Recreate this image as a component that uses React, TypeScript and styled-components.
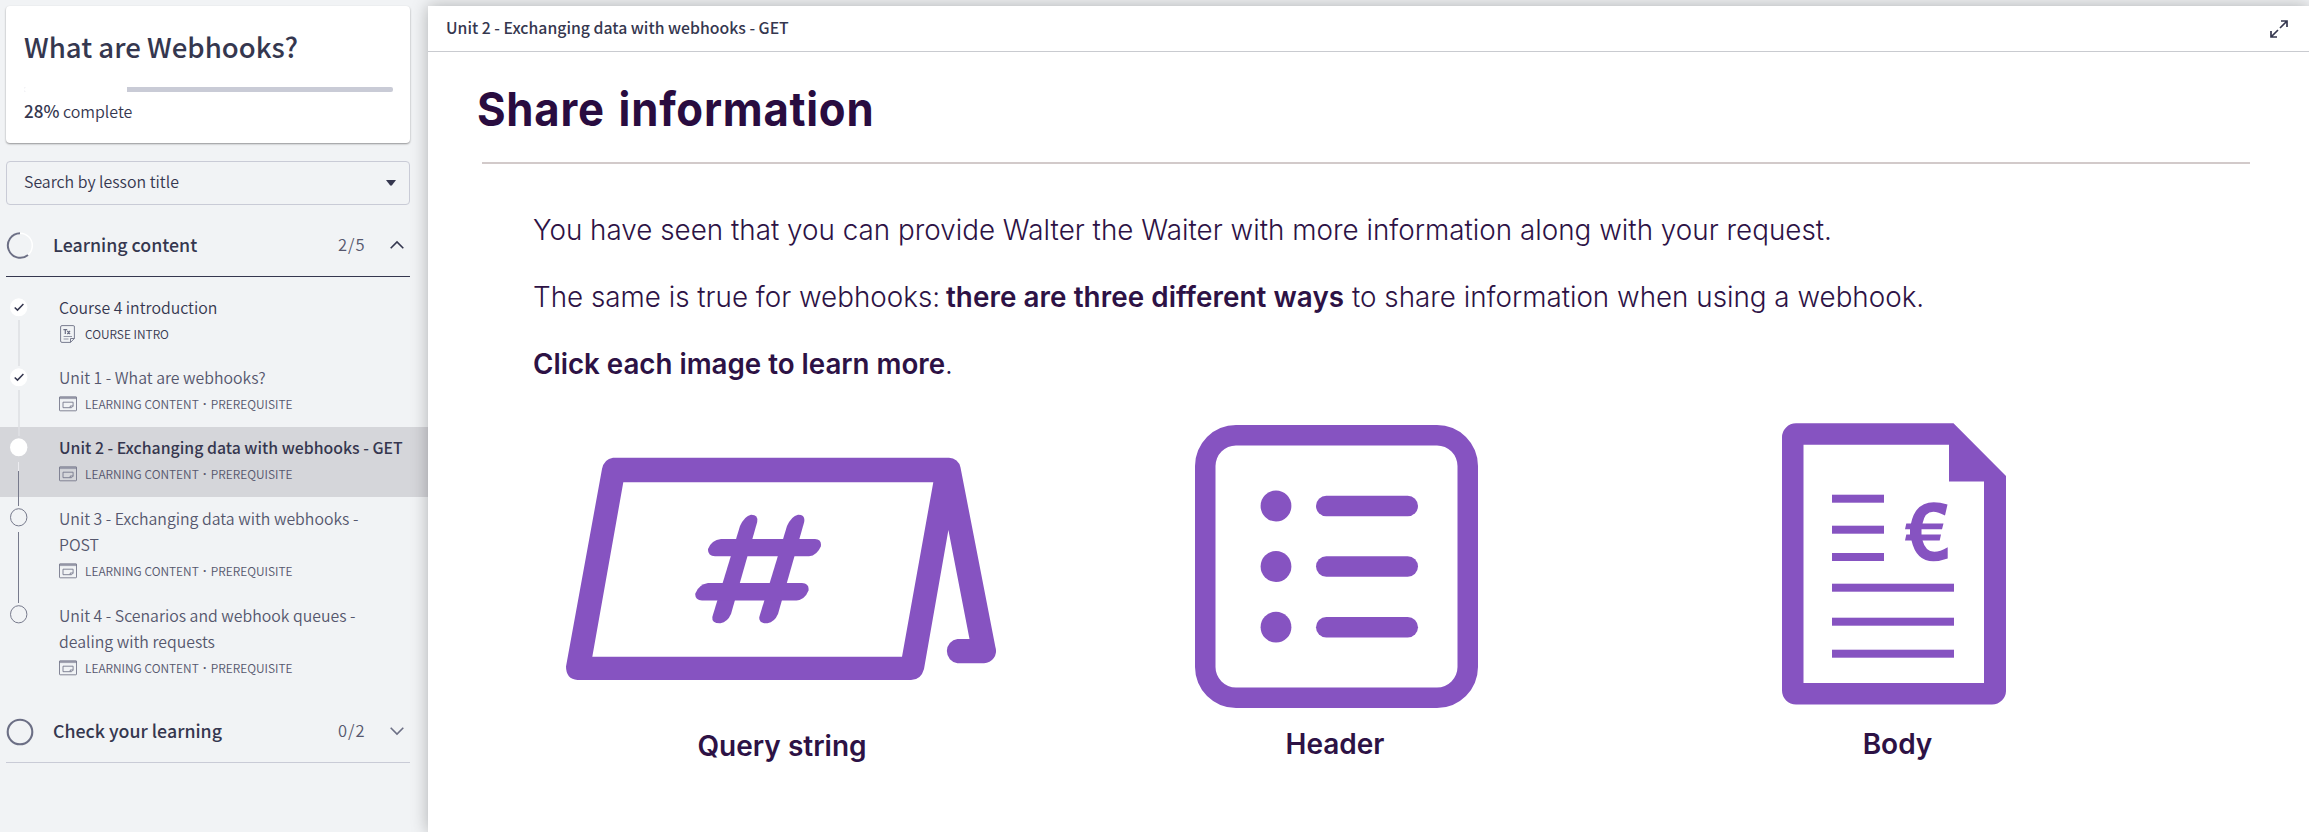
import React from 'react';
import styled, { createGlobalStyle } from 'styled-components';

const ui = `"Noto Sans CJK SC", "Noto Sans", sans-serif`;
const copy = `Inter, "Liberation Sans", sans-serif`;
const purple = '#8653c1';

const GlobalStyle = createGlobalStyle`
  * { box-sizing: border-box; }
  html, body { margin: 0; height: 832px; overflow: hidden; }
  body { background: #f1f3f5; color: #35374f; font-family: ${ui}; }
`;

/* Widens or narrows a line of text from its left edge. */
const Fit = styled.span<{ $x?: number }>`
  display: inline-block;
  white-space: nowrap;
  transform-origin: 0 50%;
  transform: scaleX(${p => p.$x ?? 1});
`;

const Page = styled.div`
  display: flex;
  width: 2309px;
  height: 832px;
  padding-top: 6px;
  overflow: hidden;
`;
const Sidebar = styled.aside`
  width: 428px;
  flex: none;
`;
const CourseCard = styled.section`
  width: 404px;
  height: 137px;
  margin-left: 6px;
  padding: 18px 17px 0 18px;
  border-radius: 4px;
  background: #fff;
  box-shadow: 0 1px 2px rgba(0, 0, 0, 0.4);
`;
const CourseTitle = styled.h1`
  margin: 0;
  font-size: 27.6px;
  line-height: 44px;
  font-weight: 500;
`;
const Track = styled.div`
  height: 5px;
  margin-top: 19px;
  border-radius: 2px;
  background: #c9cbd6;
  overflow: hidden;
`;
const TrackFill = styled.div`
  width: 28%;
  height: 100%;
  background: #fff;
`;
const Progress = styled.p`
  margin: 7px 0 0;
  font-size: 16px;
  line-height: 24px;
  font-weight: 350;
  b { font-weight: 500; font-size: 17px; }
`;
const SearchSelect = styled.div`
  display: flex;
  align-items: center;
  justify-content: space-between;
  width: 404px;
  height: 44px;
  margin: 18px 0 0 6px;
  padding: 0 13px 0 17px;
  border: 1px solid #c9cbd6;
  border-radius: 4px;
  font-size: 15.9px;
  font-weight: 350;
  line-height: 24px;
`;
const SearchLabel = styled.span`
  padding-bottom: 3px;
`;
const SectionHeader = styled.div<{ $open?: boolean }>`
  display: flex;
  align-items: center;
  width: 404px;
  height: ${p => (p.$open ? 72 : 62)}px;
  margin-left: 6px;
  padding-top: ${p => (p.$open ? 10 : 0)}px;
  border-bottom: 1px solid ${p => (p.$open ? '#35374f' : '#c9cbd6')};
`;
const SectionTitle = styled.h2`
  flex: 1;
  margin: 0 0 0 19px;
  padding-bottom: 3px;
  font-size: 17.8px;
  line-height: 28px;
  font-weight: 500;
`;
const Count = styled.span`
  width: 52px;
  padding-bottom: 3px;
  font-size: 16.5px;
  line-height: 24px;
  letter-spacing: 1px;
  font-weight: 350;
  color: #55576d;
`;
const Chevron = styled.svg`
  width: 14px;
  height: 8px;
  margin: 0 6px 2px 0;
  overflow: visible;
`;
const LessonList = styled.ul`
  margin: 0;
  padding: 10px 0;
  list-style: none;
`;
const LessonRow = styled.li<{ $active?: boolean; $h: number }>`
  display: flex;
  height: ${p => p.$h}px;
  background: ${p => (p.$active ? '#d5d6da' : 'transparent')};
`;
const Rail = styled.div`
  width: 59px;
  flex: none;
`;
const LessonText = styled.div<{ $low?: boolean }>`
  padding-top: ${p => (p.$low ? 9 : 8)}px;
`;
const LessonTitle = styled.div<{ $active?: boolean; $dark?: boolean }>`
  font-size: 15.85px;
  line-height: 26px;
  white-space: pre;
  font-weight: ${p => (p.$active ? 500 : 350)};
  color: ${p => (p.$active || p.$dark ? '#35374f' : '#55576d')};
`;
const Meta = styled.div<{ $dark?: boolean }>`
  display: flex;
  align-items: center;
  height: 24px;
  font-size: 11.95px;
  font-weight: 350;
  color: ${p => (p.$dark ? '#35374f' : '#55576d')};
`;
const MetaDot = styled.span`
  width: 12px;
  text-align: center;
  font-family: "Noto Sans", sans-serif;
  font-weight: 700;
`;
const MetaIcon = styled.svg`
  width: 18px;
  height: 18px;
  margin: 1px 8px 0 0;
`;
const Main = styled.main`
  display: flex;
  flex-direction: column;
  flex: 1;
  background: #fff;
  box-shadow: 0 0 16px rgba(0, 0, 0, 0.28);
`;
const LessonBar = styled.header`
  display: flex;
  align-items: center;
  justify-content: space-between;
  height: 46px;
  padding: 0 21px 0 18px;
  border-bottom: 1px solid #c9cbd0;
  font-size: 15.8px;
  font-weight: 500;
`;
const LessonBarTitle = styled.span`
  padding-bottom: 2px;
`;
const Slide = styled.article`
  padding: 25px 59px 0 48px;
  font-family: ${copy};
  color: #2d1245;
`;
const SlideTitle = styled.h2`
  height: 85px;
  margin: 0 0 0 1px;
  padding-top: 4px;
  color: #290c40;
  font-size: 47px;
  line-height: 56px;
  font-weight: 700;
  letter-spacing: 0.8px;
  word-spacing: 3px;
`;
const Rule = styled.hr`
  height: 2px;
  margin: 0 0 0 6px;
  border: 0;
  background: #d2caca;
`;
const Paragraphs = styled.div`
  padding: 33px 0 0 57px;
`;
const Paragraph = styled.p`
  margin: 0;
  font-size: 28px;
  line-height: 67px;
  font-weight: 300;
  b { font-weight: 600; }
`;
const Emphasis = styled.b`
  margin-left: -2px;
  letter-spacing: 0.08px;
`;
const Cards = styled.div`
  display: flex;
  align-items: flex-start;
`;
const Figure = styled.figure<{ $left: number; $top: number; $w: number }>`
  display: flex;
  flex-direction: column;
  align-items: center;
  width: ${p => p.$w}px;
  margin: ${p => p.$top}px 0 0 ${p => p.$left}px;
`;
const Caption = styled.figcaption<{ $gap: number; $before?: number; $after?: number }>`
  margin-top: ${p => p.$gap}px;
  padding: 0 ${p => p.$after ?? 0}px 0 ${p => p.$before ?? 0}px;
  font-size: 28px;
  line-height: 34px;
  font-weight: 600;
`;

type State = 'done' | 'current' | 'todo';
interface Lesson { title: string; meta: string[]; state: State; h: number; intro?: boolean }

const unitMeta = ['LEARNING CONTENT', 'PREREQUISITE'];
const lessons: Lesson[] = [
  { title: 'Course 4 introduction', meta: ['COURSE INTRO'], state: 'done', h: 70, intro: true },
  { title: 'Unit 1 - What are webhooks?', meta: unitMeta, state: 'done', h: 70 },
  { title: 'Unit 2 - Exchanging data with webhooks - GET', meta: unitMeta, state: 'current', h: 70 },
  { title: 'Unit 3 - Exchanging data with webhooks -\nPOST', meta: unitMeta, state: 'todo', h: 97 },
  { title: 'Unit 4 - Scenarios and webhook queues -\ndealing with requests', meta: unitMeta, state: 'todo', h: 97 },
];

const RailSvg = styled.svg`
  display: block;
  overflow: visible;
`;

const RailMark = ({ state, h, last }: { state: State; h: number; last: boolean }) => (
  <RailSvg width="40" height={h}>
    {!last && state === 'done' && <path d={`M19 33V${h + 9}`} stroke="#dfe0e4" strokeWidth="1.6" />}
    {state === 'current' && (
      <>
        <path d="M18.5 35V44" stroke="#ececf0" strokeWidth="1" />
        <path d={`M18.5 44V${h + 9}`} stroke="#777a8c" strokeWidth="1" />
      </>
    )}
    {!last && state === 'todo' && <path d={`M18.5 35V${h + 9}`} stroke="#777a8c" strokeWidth="1" />}
    {state === 'todo'
      ? <ellipse cx="18.7" cy="20.3" rx="8.2" ry="8.6" fill="none" stroke="#777a8c" strokeWidth="1" />
      : <ellipse cx="18.7" cy="20.3" rx="8.7" ry="9" fill="#fff" />}
    {state === 'done' && <path d="M14.7 20.5L17.5 23.1L23.4 16.9" fill="none" stroke="#35374f" strokeWidth="1.5" />}
  </RailSvg>
);

const IntroIcon = () => (
  <MetaIcon viewBox="0 0 18 18" fill="none" stroke="#6c6f85" strokeWidth="0.9">
    <path d="M15.4 13.5V2A1.2 1.2 0 0 0 14.2.6H3A1.4 1.4 0 0 0 1.6 2V16A1.4 1.4 0 0 0 3 17.4H11.5L15.4 13.5H11.5V17.4" />
    <path d="M4.4 4.6H8.2M6.3 4.6V9M8.3 6L11 9M11 6L8.3 9" strokeWidth="1.2" />
    <path d="M4.6 11.5H13M4.6 14H9.5" strokeWidth="0.7" />
  </MetaIcon>
);
const ContentIcon = () => (
  <MetaIcon viewBox="0 0 18 18" fill="none" stroke="#77798c" strokeWidth="0.9">
    <path d="M.5 2H17.5V3.6H.5Z" fill="#c4c5cf" strokeWidth="0.6" />
    <rect x=".5" y="2" width="17" height="13.8" rx=".6" />
    <path d="M11.2 12.7H4V7.2H14.1V11.2L12.6 12.7H11.2V11H14.1" />
  </MetaIcon>
);

const TentIcon = () => (
  <svg width="432" height="224" fill={purple}>
    <path fillRule="evenodd" d="M47 .7H383A12 12 0 0 1 394.500 10.500L429.400 190A12.300 12.300 0 0 1 418 206.200H391.500A12.200 12.200 0 0 1 391.500 182H403.500L382.400 73L358 212Q355 223 345 223H11.500Q0 222 0 209.500L36 12Q38 2 47 .7ZM57.300 25.300L26.300 199.700H336L367.300 25.300Z" />
    <path d="M174 69Q178.500 59 185 57.700Q192.500 57.500 191.200 65L165 157Q161.500 165 154.500 166.300Q145.500 166.500 146.300 160Z" />
    <path d="M221 69Q225.500 59 232 57.700Q239.500 57.500 238.200 65L212 157Q208.500 165 201.500 166.300Q192.500 166.500 193.300 160Z" />
    <path d="M155 82H249Q256 82.500 254.800 89.500Q251 98.500 243 99.300H149Q141.500 99 142 92Q145.500 83 155 82Z" />
    <path d="M142 126H236Q243.500 126.500 242.500 133.500Q239 142.500 230.500 143.500H136Q128.700 143 129.300 136.500Q132.500 127.500 142 126Z" />
  </svg>
);
const ListIcon = () => (
  <svg width="283" height="283" fill={purple}>
    <path fillRule="evenodd" d="M41 0H242A41 41 0 0 1 283 41V242A41 41 0 0 1 242 283H41A41 41 0 0 1 0 242V41A41 41 0 0 1 41 0ZM41 20.500A20.500 20.500 0 0 0 20.500 41V242A20.500 20.500 0 0 0 41 262.500H242A20.500 20.500 0 0 0 262.500 242V41A20.500 20.500 0 0 0 242 20.500Z" />
    {[81, 141.5, 202.2].map(y => (
      <g key={y}>
        <circle cx="81" cy={y} r="15.4" />
        <rect x="121" y={y - 10.3} width="102" height="20.6" rx="10.3" />
      </g>
    ))}
  </svg>
);
const DocumentIcon = () => (
  <svg width="224" height="282" fill={purple}>
    <path fillRule="evenodd" d="M14 .3H171.500L224 53V267A14 14 0 0 1 210 281.500H14A14 14 0 0 1 0 267.500V14.300A14 14 0 0 1 14 .3ZM21.500 21.700V260H202V58.500H167V21.700Z" />
    {[71.7, 102.7, 130].map(y => <rect key={y} x="50" y={y} width="52" height="8" />)}
    {[160.7, 194.7, 226.7].map(y => <rect key={y} x="50" y={y} width="122" height="8" />)}
    <path d="M165.500 81.500L163 92.500Q144 82 140.500 100.500H161.500L160 106.300H139.500V111.500H159L157.700 117.500H140.500Q145.500 136 165.700 124.300V135.500Q136 146 129.500 117.500H123L124.300 111.500H128V106.300H123L124.300 100.500H129Q135 72 165.500 81.500Z" />
  </svg>
);

const App = () => (
  <>
    <GlobalStyle />
    <Page>
      <Sidebar>
        <CourseCard>
          <CourseTitle>What are Webhooks?</CourseTitle>
          <Track><TrackFill /></Track>
          <Progress><b>28%</b> complete</Progress>
        </CourseCard>
        <SearchSelect>
          <SearchLabel>Search by lesson title</SearchLabel>
          <svg width="10" height="6"><path d="M0 0H10L6 5.300Q5 6 4 5.300Z" fill="#35374f" /></svg>
        </SearchSelect>
        <SectionHeader $open>
          <svg width="28" height="28" fill="none">
            <circle cx="14" cy="13.500" r="12.300" stroke="#fff" strokeWidth="1.500" />
            <path d="M14 1.200A12.300 12.300 0 1 0 22 23" stroke="#6c6f85" strokeWidth="2" />
          </svg>
          <SectionTitle>Learning content</SectionTitle>
          <Count>2/5</Count>
          <Chevron fill="none" stroke="#35374f" strokeWidth="1.600"><path d="M.7 7.300L7 1L13.300 7.300" /></Chevron>
        </SectionHeader>
        <LessonList>
          {lessons.map((l, i) => (
            <LessonRow key={l.title} $active={l.state === 'current'} $h={l.h}>
              <Rail><RailMark state={l.state} h={l.h} last={i === lessons.length - 1} /></Rail>
              <LessonText $low={l.state === 'todo'}>
                <LessonTitle $active={l.state === 'current'} $dark={l.intro}>{l.title}</LessonTitle>
                <Meta $dark={l.intro}>
                  {l.intro ? <IntroIcon /> : <ContentIcon />}
                  <span>{l.meta[0]}</span>
                  {l.meta[1] && <><MetaDot>·</MetaDot><span>{l.meta[1]}</span></>}
                </Meta>
              </LessonText>
            </LessonRow>
          ))}
        </LessonList>
        <SectionHeader>
          <svg width="28" height="28" fill="none"><circle cx="14" cy="14" r="12.300" stroke="#6c6f85" strokeWidth="2.100" /></svg>
          <SectionTitle>Check your learning</SectionTitle>
          <Count>0/2</Count>
          <Chevron fill="none" stroke="#6c6f85" strokeWidth="1.600"><path d="M.7 .7L7 7L13.300 .7" /></Chevron>
        </SectionHeader>
      </Sidebar>
      <Main>
        <LessonBar>
          <LessonBarTitle>Unit 2 - Exchanging data with webhooks - GET</LessonBarTitle>
          <svg width="18" height="18" fill="none" stroke="#35374f" strokeWidth="1.700">
            <path d="M10 8L17 1M11 1H17V7M8 10L1 17M1 11V17H7" />
          </svg>
        </LessonBar>
        <Slide>
          <SlideTitle><Fit $x={0.93}>Share information</Fit></SlideTitle>
          <Rule />
          <Paragraphs>
            <Paragraph><Fit $x={0.9935}>You have seen that you can provide Walter the Waiter with more information along with your request.</Fit></Paragraph>
            <Paragraph><Fit $x={0.992}>The same is true for webhooks: <Emphasis>there are three different ways</Emphasis> to share information when using a webhook.</Fit></Paragraph>
            <Paragraph><Fit $x={0.989}><b>Click each image to learn more</b>.</Fit></Paragraph>
          </Paragraphs>
          <Cards>
            <Figure $left={91} $top={59} $w={430}><TentIcon /><Caption $gap={48}>Query string</Caption></Figure>
            <Figure $left={198} $top={27} $w={283}><ListIcon /><Caption $gap={19} $after={3}>Header</Caption></Figure>
            <Figure $left={304} $top={25} $w={224}><DocumentIcon /><Caption $gap={22} $before={7}>Body</Caption></Figure>
          </Cards>
        </Slide>
      </Main>
    </Page>
  </>
);

export default App;
